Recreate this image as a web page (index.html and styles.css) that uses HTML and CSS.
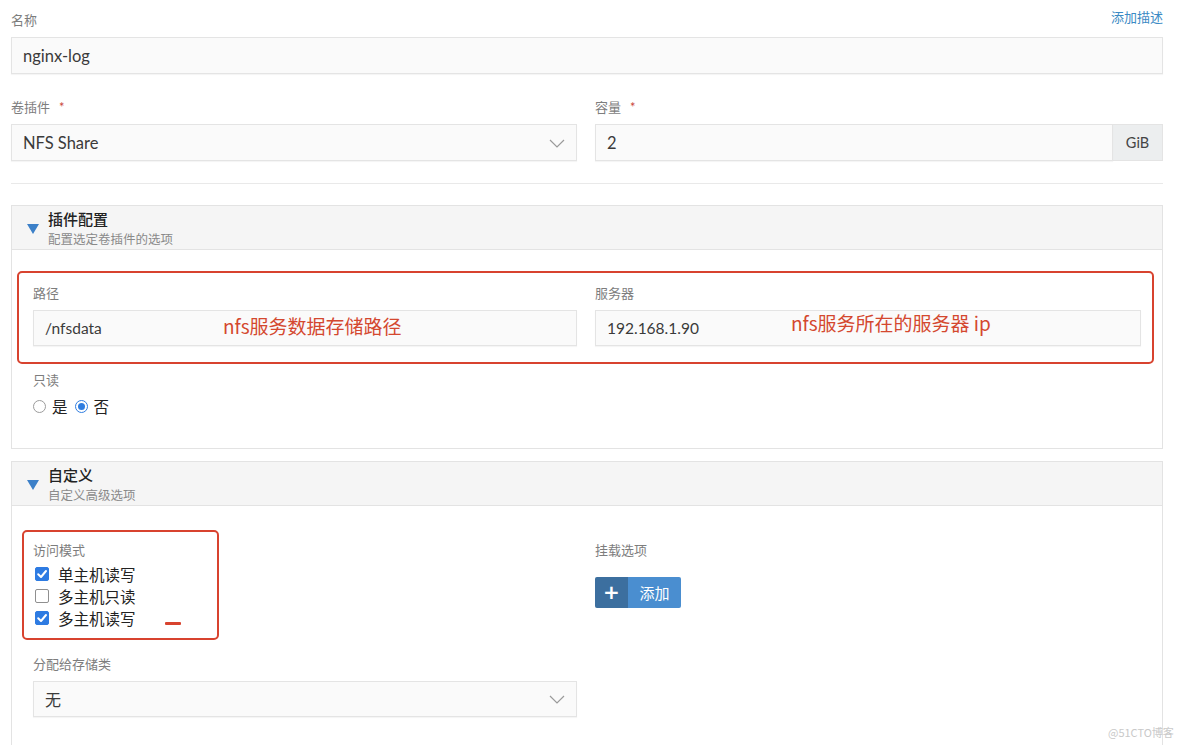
FILE: index.html
```html
<!DOCTYPE html>
<html lang="zh-CN">
<head>
<meta charset="utf-8">
<title>nginx-log</title>
<link rel="stylesheet" href="styles.css">
</head>
<body>
<div class="page">
  <div class="field-head">
    <span class="label">名称</span>
    <a class="link">添加描述</a>
  </div>
  <div class="input tall">nginx-log</div>

  <div class="grid2 top-row">
    <div class="field">
      <div class="field-head"><span class="label">卷插件</span><span class="req">*</span></div>
      <div class="input tall select">NFS Share
        <svg class="chev" width="16" height="9" viewBox="0 0 16 9"><polyline points="1,1 8,8 15,1" fill="none" stroke="#9a9a9a" stroke-width="1.2"/></svg>
      </div>
    </div>
    <div class="field">
      <div class="field-head"><span class="label">容量</span><span class="req">*</span></div>
      <div class="input-group">
        <div class="input tall grow">2</div>
        <div class="addon">GiB</div>
      </div>
    </div>
  </div>

  <div class="divider"></div>

  <section class="panel">
    <div class="panel-head">
      <span class="tri"></span>
      <div class="head-text">
        <div class="title">插件配置</div>
        <div class="sub">配置选定卷插件的选项</div>
      </div>
    </div>
    <div class="panel-body body1">
      <div class="grid-body boxed">
        <div class="field">
          <div class="field-head"><span class="label">路径</span></div>
          <div class="input mid">/nfsdata<span class="note note-left">nfs服务数据存储路径</span></div>
        </div>
        <div class="field">
          <div class="field-head"><span class="label">服务器</span></div>
          <div class="input mid">192.168.1.90<span class="note note-right">nfs服务所在的服务器 ip</span></div>
        </div>
        <div class="redbox redbox-1"></div>
      </div>
      <div class="field ro">
        <div class="field-head"><span class="label">只读</span></div>
        <div class="radios">
          <span class="radio"></span><span class="rtext">是</span>
          <span class="radio on"></span><span class="rtext">否</span>
        </div>
      </div>
    </div>
  </section>

  <section class="panel panel2">
    <div class="panel-head">
      <span class="tri"></span>
      <div class="head-text">
        <div class="title">自定义</div>
        <div class="sub">自定义高级选项</div>
      </div>
    </div>
    <div class="panel-body body2">
      <div class="grid-body">
        <div class="access">
          <div class="field-head"><span class="label">访问模式</span></div>
          <div class="checks">
            <div class="check"><span class="cb on"><svg width="14" height="14" viewBox="0 0 14 14"><polyline points="3.2,7.2 6,10 11,4" fill="none" stroke="#fff" stroke-width="2" stroke-linecap="round" stroke-linejoin="round"/></svg></span>单主机读写</div>
            <div class="check"><span class="cb"></span>多主机只读</div>
            <div class="check"><span class="cb on"><svg width="14" height="14" viewBox="0 0 14 14"><polyline points="3.2,7.2 6,10 11,4" fill="none" stroke="#fff" stroke-width="2" stroke-linecap="round" stroke-linejoin="round"/></svg></span>多主机读写</div>
          </div>
          <div class="redbox redbox-2"></div>
          <div class="dash"></div>
        </div>
        <div class="mount">
          <div class="field-head"><span class="label">挂载选项</span></div>
          <button class="btn"><span class="btn-icon">+</span><span class="btn-text">添加</span></button>
        </div>
        <div class="field storage">
          <div class="field-head"><span class="label">分配给存储类</span></div>
          <div class="input mid select cjk">无
            <svg class="chev" width="16" height="9" viewBox="0 0 16 9"><polyline points="1,1 8,8 15,1" fill="none" stroke="#9a9a9a" stroke-width="1.2"/></svg>
          </div>
        </div>
      </div>
    </div>
  </section>
</div>
<div class="watermark">@51CTO博客</div>
</body>
</html>
```

FILE: styles.css
```css
* { box-sizing: border-box; }
html, body { margin: 0; padding: 0; background: #fff; }
body {
  font-family: Lato, "Noto Sans CJK SC", sans-serif;
  color: #333;
  overflow: hidden;
  height: 745px;
  position: relative;
}
.page {
  width: 1163px;
  padding: 11.5px 0 0 11px;
}
.field-head {
  display: flex;
  align-items: center;
  justify-content: space-between;
  height: 17px;
  margin-bottom: 8.5px;
}
.field-head .req { margin-right: auto; }
.label {
  font-size: 13px;
  line-height: 17px;
  color: #7d7d7d;
}
.req {
  color: #c8453a;
  font-size: 13px;
  margin-left: 9px;
  line-height: 17px;
}
.link {
  font-size: 13px;
  line-height: 17px;
  color: #3b8ac4;
  margin-top: -6px;
}
.input {
  position: relative;
  display: flex;
  align-items: center;
  border: 1px solid #e4e4e4;
  background: #fafafa;
  padding: 0 11px;
  font-size: 16.5px;
  color: #3a3a3a;
  box-shadow: 0 1px 1px rgba(0,0,0,0.04);
}
.input.tall { height: 37px; }
.input.mid { height: 36px; font-size: 15.5px; }
.input.cjk { font-size: 16px; }
.select .chev { position: absolute; right: 11px; top: 50%; margin-top: -4px; }
.grid2 {
  display: grid;
  grid-template-columns: 566px 568px;
  column-gap: 18px;
}
.top-row { margin-top: 24.5px; }
.input-group { display: flex; }
.grow { flex: 1; }
.addon {
  width: 50px;
  height: 37px;
  display: flex;
  align-items: center;
  justify-content: center;
  background: #eceeef;
  border: 1px solid #e4e4e4;
  border-left: none;
  font-size: 14.5px;
  color: #444;
}
.divider {
  margin-top: 22px;
  width: 1152px;
  border-top: 1px solid #e9e9e9;
}
.panel {
  margin-top: 21px;
  width: 1152px;
  border: 1px solid #e3e3e3;
  background: #fff;
}
.panel2 { margin-top: 12px; }
.panel-head {
  height: 44px;
  background: #f5f5f5;
  border-bottom: 1px solid #e3e3e3;
  display: flex;
  align-items: center;
  padding-left: 15px;
  padding-top: 1px;
}
.tri {
  width: 0;
  height: 0;
  border-left: 6px solid transparent;
  border-right: 6px solid transparent;
  border-top: 10px solid #3c80c8;
  margin-right: 9px;
  margin-top: 1px;
}
.head-text { display: flex; flex-direction: column; }
.title {
  font-family: "Noto Sans CJK SC", sans-serif;
  font-size: 15px;
  line-height: 18px;
  color: #222;
  font-weight: 500;
}
.sub {
  font-family: "Noto Sans CJK SC", sans-serif;
  font-size: 12.5px;
  line-height: 15px;
  margin-top: 3px;
  color: #8a8a8a;
}
.panel-body { padding: 34.5px 21px 33px 21px; }
.body2 { padding-top: 35.5px; padding-bottom: 60px; }
.grid-body {
  position: relative;
  display: grid;
  grid-template-columns: 544px 546px;
  column-gap: 18px;
}
.redbox {
  position: absolute;
  border: 2.5px solid #d8432f;
  border-radius: 5px;
  pointer-events: none;
}
.redbox-1 { left: -16px; top: -13.5px; right: -13px; bottom: -18px; }
.note {
  position: absolute;
  font-family: "Noto Sans CJK SC", sans-serif;
  font-size: 19px;
  line-height: 22px;
  color: #d4482f;
  white-space: nowrap;
}
.note-left { left: 189px; top: 4px; }
.note-right { left: 195px; top: 1px; }
.ro { margin-top: 25.5px; }
.radios {
  display: flex;
  align-items: center;
  height: 18px;
}
.radio {
  width: 13px;
  height: 13px;
  border-radius: 50%;
  border: 1px solid #9c9c9c;
  background: #fff;
  margin-right: 6px;
  position: relative;
}
.radio.on { border-color: #2f7de0; }
.radio.on::after {
  content: "";
  position: absolute;
  left: 2px; top: 2px;
  width: 7px; height: 7px;
  border-radius: 50%;
  background: #2f7de0;
}
.rtext {
  font-family: "Noto Sans CJK SC", sans-serif;
  font-size: 15.5px;
  color: #222;
  margin-right: 7px;
}
.access { position: relative; }
.access .field-head { margin-bottom: 4.5px; }
.check {
  display: flex;
  align-items: center;
  height: 22px;
  font-family: "Noto Sans CJK SC", sans-serif;
  font-size: 15.5px;
  color: #222;
  padding-left: 2px;
}
.cb {
  width: 14px;
  height: 14px;
  border: 1px solid #8f8f8f;
  border-radius: 2px;
  background: #fff;
  margin-right: 9px;
  display: flex;
}
.cb.on { background: #2e7be2; border-color: #2e7be2; }
.cb.on svg { margin: -1px; }
.redbox-2 { left: -11px; top: -11.5px; width: 197px; height: 110px; }
.dash {
  position: absolute;
  left: 132px;
  top: 80px;
  width: 16px;
  height: 3px;
  border-radius: 1px;
  background: #d8432f;
}
.mount .field-head { margin-bottom: 18.5px; }
.btn {
  display: flex;
  height: 31px;
  width: 86px;
  padding: 0;
  border: none;
  border-radius: 2px;
  overflow: hidden;
  cursor: pointer;
}
.btn-icon {
  width: 33px;
  height: 31px;
  background: #3c6f9f;
  color: #fff;
  font-family: "DejaVu Sans", sans-serif;
  font-weight: bold;
  font-size: 20px;
  line-height: 31px;
  text-align: center;
}
.btn-text {
  flex: 1;
  height: 31px;
  background: #4a8ed0;
  color: #fff;
  font-family: "Noto Sans CJK SC", sans-serif;
  font-size: 15px;
  line-height: 31px;
  text-align: center;
}
.storage { margin-top: 26.5px; }
.watermark {
  position: absolute;
  left: 1108px;
  top: 725px;
  font-family: "Noto Sans CJK SC", sans-serif;
  font-size: 11px;
  line-height: 14px;
  color: #c9c9c9;
}
```
